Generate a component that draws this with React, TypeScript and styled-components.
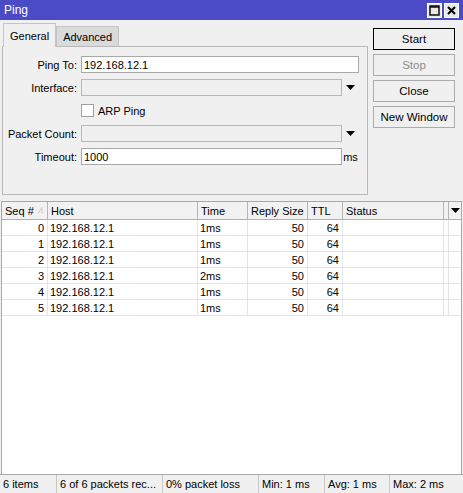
import React from 'react';
import styled, { createGlobalStyle } from 'styled-components';

const GlobalStyle = createGlobalStyle`
  html, body {
    margin: 0;
    padding: 0;
    height: 100%;
  }
  body {
    font-family: "Liberation Sans", Arial, sans-serif;
    font-size: 11px;
    color: #000;
    background: #f0f0f0;
  }
  #root {
    height: 100%;
  }
`;

type PingRow = { seq: number; host: string; time: string; size: number; ttl: number };

const rows: PingRow[] = [
  { seq: 0, host: '192.168.12.1', time: '1ms', size: 50, ttl: 64 },
  { seq: 1, host: '192.168.12.1', time: '1ms', size: 50, ttl: 64 },
  { seq: 2, host: '192.168.12.1', time: '1ms', size: 50, ttl: 64 },
  { seq: 3, host: '192.168.12.1', time: '2ms', size: 50, ttl: 64 },
  { seq: 4, host: '192.168.12.1', time: '1ms', size: 50, ttl: 64 },
  { seq: 5, host: '192.168.12.1', time: '1ms', size: 50, ttl: 64 },
];

const COLS = '46px 150px 50px 60px 35px 101px 5px 1fr';

const Window = styled.div`
  display: flex;
  flex-direction: column;
  height: 100vh;
  background: #f0f0f0;
  overflow: hidden;
`;

const TitleBar = styled.div`
  height: 20px;
  flex: none;
  display: flex;
  align-items: center;
  background: #4b4bc6;
  color: #fff;
  padding: 0 4px 0 4px;
  font-size: 12px;
`;

const Title = styled.span`
  flex: 1;
`;

const TitleButton = styled.div`
  width: 13px;
  height: 13px;
  margin-left: 2px;
  background: #e8e8e8;
  border: 1px solid #fff;
  display: flex;
  align-items: center;
  justify-content: center;
`;

const Top = styled.div`
  display: flex;
  gap: 5px;
  padding: 2px 0 0 2px;
  flex: none;
`;

const TabArea = styled.div`
  width: 366px;
  display: flex;
  flex-direction: column;
`;

const Tabs = styled.div`
  display: flex;
  align-items: flex-end;
  height: 24px;
  padding-left: 1px;
`;

const Tab = styled.div<{ $active?: boolean }>`
  height: ${(p) => (p.$active ? '24px' : '20px')};
  padding: 0 6px;
  display: flex;
  align-items: center;
  background: ${(p) => (p.$active ? '#f0f0f0' : '#dadada')};
  border: 1px solid #c4c4c4;
  border-bottom: none;
  margin-bottom: ${(p) => (p.$active ? '-1px' : '0')};
  position: relative;
  box-sizing: border-box;
  z-index: ${(p) => (p.$active ? 1 : 0)};
`;

const Panel = styled.div`
  height: 149px;
  box-sizing: border-box;
  border: 1px solid #b9b9b9;
  padding: 9px 8px 0 0;
  display: flex;
  flex-direction: column;
  gap: 6px;
`;

const FormRow = styled.div`
  display: grid;
  grid-template-columns: 74px 1fr;
  column-gap: 4px;
  align-items: center;
  height: 17px;
`;

const Label = styled.span`
  text-align: right;
  white-space: nowrap;
`;

const FieldLine = styled.div`
  display: flex;
  align-items: center;
`;

const Field = styled.div<{ $disabled?: boolean }>`
  flex: 1;
  height: 17px;
  box-sizing: border-box;
  border: 1px solid ${(p) => (p.$disabled ? '#b8b8b8' : '#a8a8a8')};
  background: ${(p) => (p.$disabled ? '#f0f0f0' : '#fff')};
  padding-left: 2px;
  display: flex;
  align-items: center;
`;

const Suffix = styled.div`
  width: 17px;
  flex: none;
  display: flex;
  align-items: center;
  justify-content: center;
`;

const CheckLine = styled.label`
  display: flex;
  align-items: center;
  gap: 4px;
`;

const CheckBox = styled.span`
  width: 13px;
  height: 13px;
  box-sizing: border-box;
  border: 1px solid #a0a0a0;
  background: #fff;
`;

const ButtonColumn = styled.div`
  width: 82px;
  margin-top: 6px;
  display: flex;
  flex-direction: column;
  gap: 4px;
`;

const Button = styled.div<{ $default?: boolean; $disabled?: boolean }>`
  height: 22px;
  box-sizing: border-box;
  border: 1px solid ${(p) => (p.$default ? '#000' : '#acacac')};
  background: #f0f0f0;
  color: ${(p) => (p.$disabled ? '#8c8c8c' : '#000')};
  display: flex;
  align-items: center;
  justify-content: center;
  font-size: 11.5px;
`;

const Table = styled.div`
  flex: 1;
  margin: 6px 1px 0 1px;
  background: #fff;
  border: 1px solid #a8a8a8;
  border-bottom: none;
  display: flex;
  flex-direction: column;
  min-height: 0;
`;

const HeaderRow = styled.div`
  display: grid;
  grid-template-columns: ${COLS};
  height: 17px;
  background: #f2f2f2;
  border-bottom: 1px solid #b0b0b0;
`;

const HeaderCell = styled.div`
  display: flex;
  align-items: center;
  padding-left: 3px;
  border-right: 1px solid #b4b4b4;
  white-space: nowrap;
  overflow: hidden;
  &:last-child {
    border-right: none;
    justify-content: center;
    padding-left: 0;
  }
`;

const BodyRow = styled.div`
  display: grid;
  grid-template-columns: ${COLS};
  height: 15px;
  border-bottom: 1px solid #e4e4e4;
`;

const Cell = styled.div<{ $right?: boolean; $pad?: number }>`
  display: flex;
  align-items: center;
  justify-content: ${(p) => (p.$right ? 'flex-end' : 'flex-start')};
  padding: 0 ${(p) => (p.$right ? p.$pad ?? 3 : 0)}px 0 ${(p) => (p.$right ? 0 : 2)}px;
  border-right: 1px solid #e4e4e4;
  white-space: nowrap;
  overflow: hidden;
  &:last-child {
    border-right: none;
  }
`;

const StatusBar = styled.div`
  height: 19px;
  flex: none;
  display: grid;
  grid-template-columns: 57px 106px 96px 66px 65px 1fr;
  border-top: 1px solid #a8a8a8;
  box-sizing: border-box;
`;

const StatusCell = styled.div`
  display: flex;
  align-items: center;
  padding-left: 3px;
  border-right: 1px solid #c8c8c8;
  white-space: nowrap;
  overflow: hidden;
  &:last-child {
    border-right: none;
  }
`;

const DownArrow = () => (
  <svg width="9" height="5" viewBox="0 0 9 5">
    <polygon points="0,0 9,0 4.5,5" fill="#000" />
  </svg>
);

const SortMark = () => (
  <svg width="6" height="7" viewBox="0 0 6 7" style={{ marginLeft: 3 }}>
    <polyline points="1,6.5 5,0.5 5,6.5" fill="none" stroke="#c8c8c8" strokeWidth="1" />
  </svg>
);

const App: React.FC = () => (
  <>
    <GlobalStyle />
    <Window>
      <TitleBar>
        <Title>Ping</Title>
        <TitleButton>
          <svg width="11" height="11" viewBox="0 0 11 11">
            <rect x="1" y="1" width="9" height="9" fill="none" stroke="#000" strokeWidth="1.4" />
            <line x1="1" y1="2" x2="10" y2="2" stroke="#000" strokeWidth="1.4" />
          </svg>
        </TitleButton>
        <TitleButton>
          <svg width="11" height="11" viewBox="0 0 11 11">
            <path d="M2 2 L9 9 M9 2 L2 9" stroke="#000" strokeWidth="2" />
          </svg>
        </TitleButton>
      </TitleBar>

      <Top>
        <TabArea>
          <Tabs>
            <Tab $active>General</Tab>
            <Tab>Advanced</Tab>
          </Tabs>
          <Panel>
            <FormRow>
              <Label>Ping To:</Label>
              <FieldLine>
                <Field>192.168.12.1</Field>
              </FieldLine>
            </FormRow>
            <FormRow>
              <Label>Interface:</Label>
              <FieldLine>
                <Field $disabled />
                <Suffix>
                  <DownArrow />
                </Suffix>
              </FieldLine>
            </FormRow>
            <FormRow>
              <span />
              <CheckLine>
                <CheckBox />
                ARP Ping
              </CheckLine>
            </FormRow>
            <FormRow>
              <Label>Packet Count:</Label>
              <FieldLine>
                <Field $disabled />
                <Suffix>
                  <DownArrow />
                </Suffix>
              </FieldLine>
            </FormRow>
            <FormRow>
              <Label>Timeout:</Label>
              <FieldLine>
                <Field>1000</Field>
                <Suffix>ms</Suffix>
              </FieldLine>
            </FormRow>
          </Panel>
        </TabArea>

        <ButtonColumn>
          <Button $default>Start</Button>
          <Button $disabled>Stop</Button>
          <Button>Close</Button>
          <Button>New Window</Button>
        </ButtonColumn>
      </Top>

      <Table>
        <HeaderRow>
          <HeaderCell>
            Seq #
            <SortMark />
          </HeaderCell>
          <HeaderCell>Host</HeaderCell>
          <HeaderCell>Time</HeaderCell>
          <HeaderCell>Reply Size</HeaderCell>
          <HeaderCell>TTL</HeaderCell>
          <HeaderCell>Status</HeaderCell>
          <HeaderCell />
          <HeaderCell>
            <DownArrow />
          </HeaderCell>
        </HeaderRow>
        {rows.map((r) => (
          <BodyRow key={r.seq}>
            <Cell $right>{r.seq}</Cell>
            <Cell>{r.host}</Cell>
            <Cell>{r.time}</Cell>
            <Cell $right>{r.size}</Cell>
            <Cell $right>{r.ttl}</Cell>
            <Cell />
            <Cell />
            <Cell />
          </BodyRow>
        ))}
      </Table>

      <StatusBar>
        <StatusCell>6 items</StatusCell>
        <StatusCell>6 of 6 packets rec...</StatusCell>
        <StatusCell>0% packet loss</StatusCell>
        <StatusCell>Min: 1 ms</StatusCell>
        <StatusCell>Avg: 1 ms</StatusCell>
        <StatusCell>Max: 2 ms</StatusCell>
      </StatusBar>
    </Window>
  </>
);

export default App;
